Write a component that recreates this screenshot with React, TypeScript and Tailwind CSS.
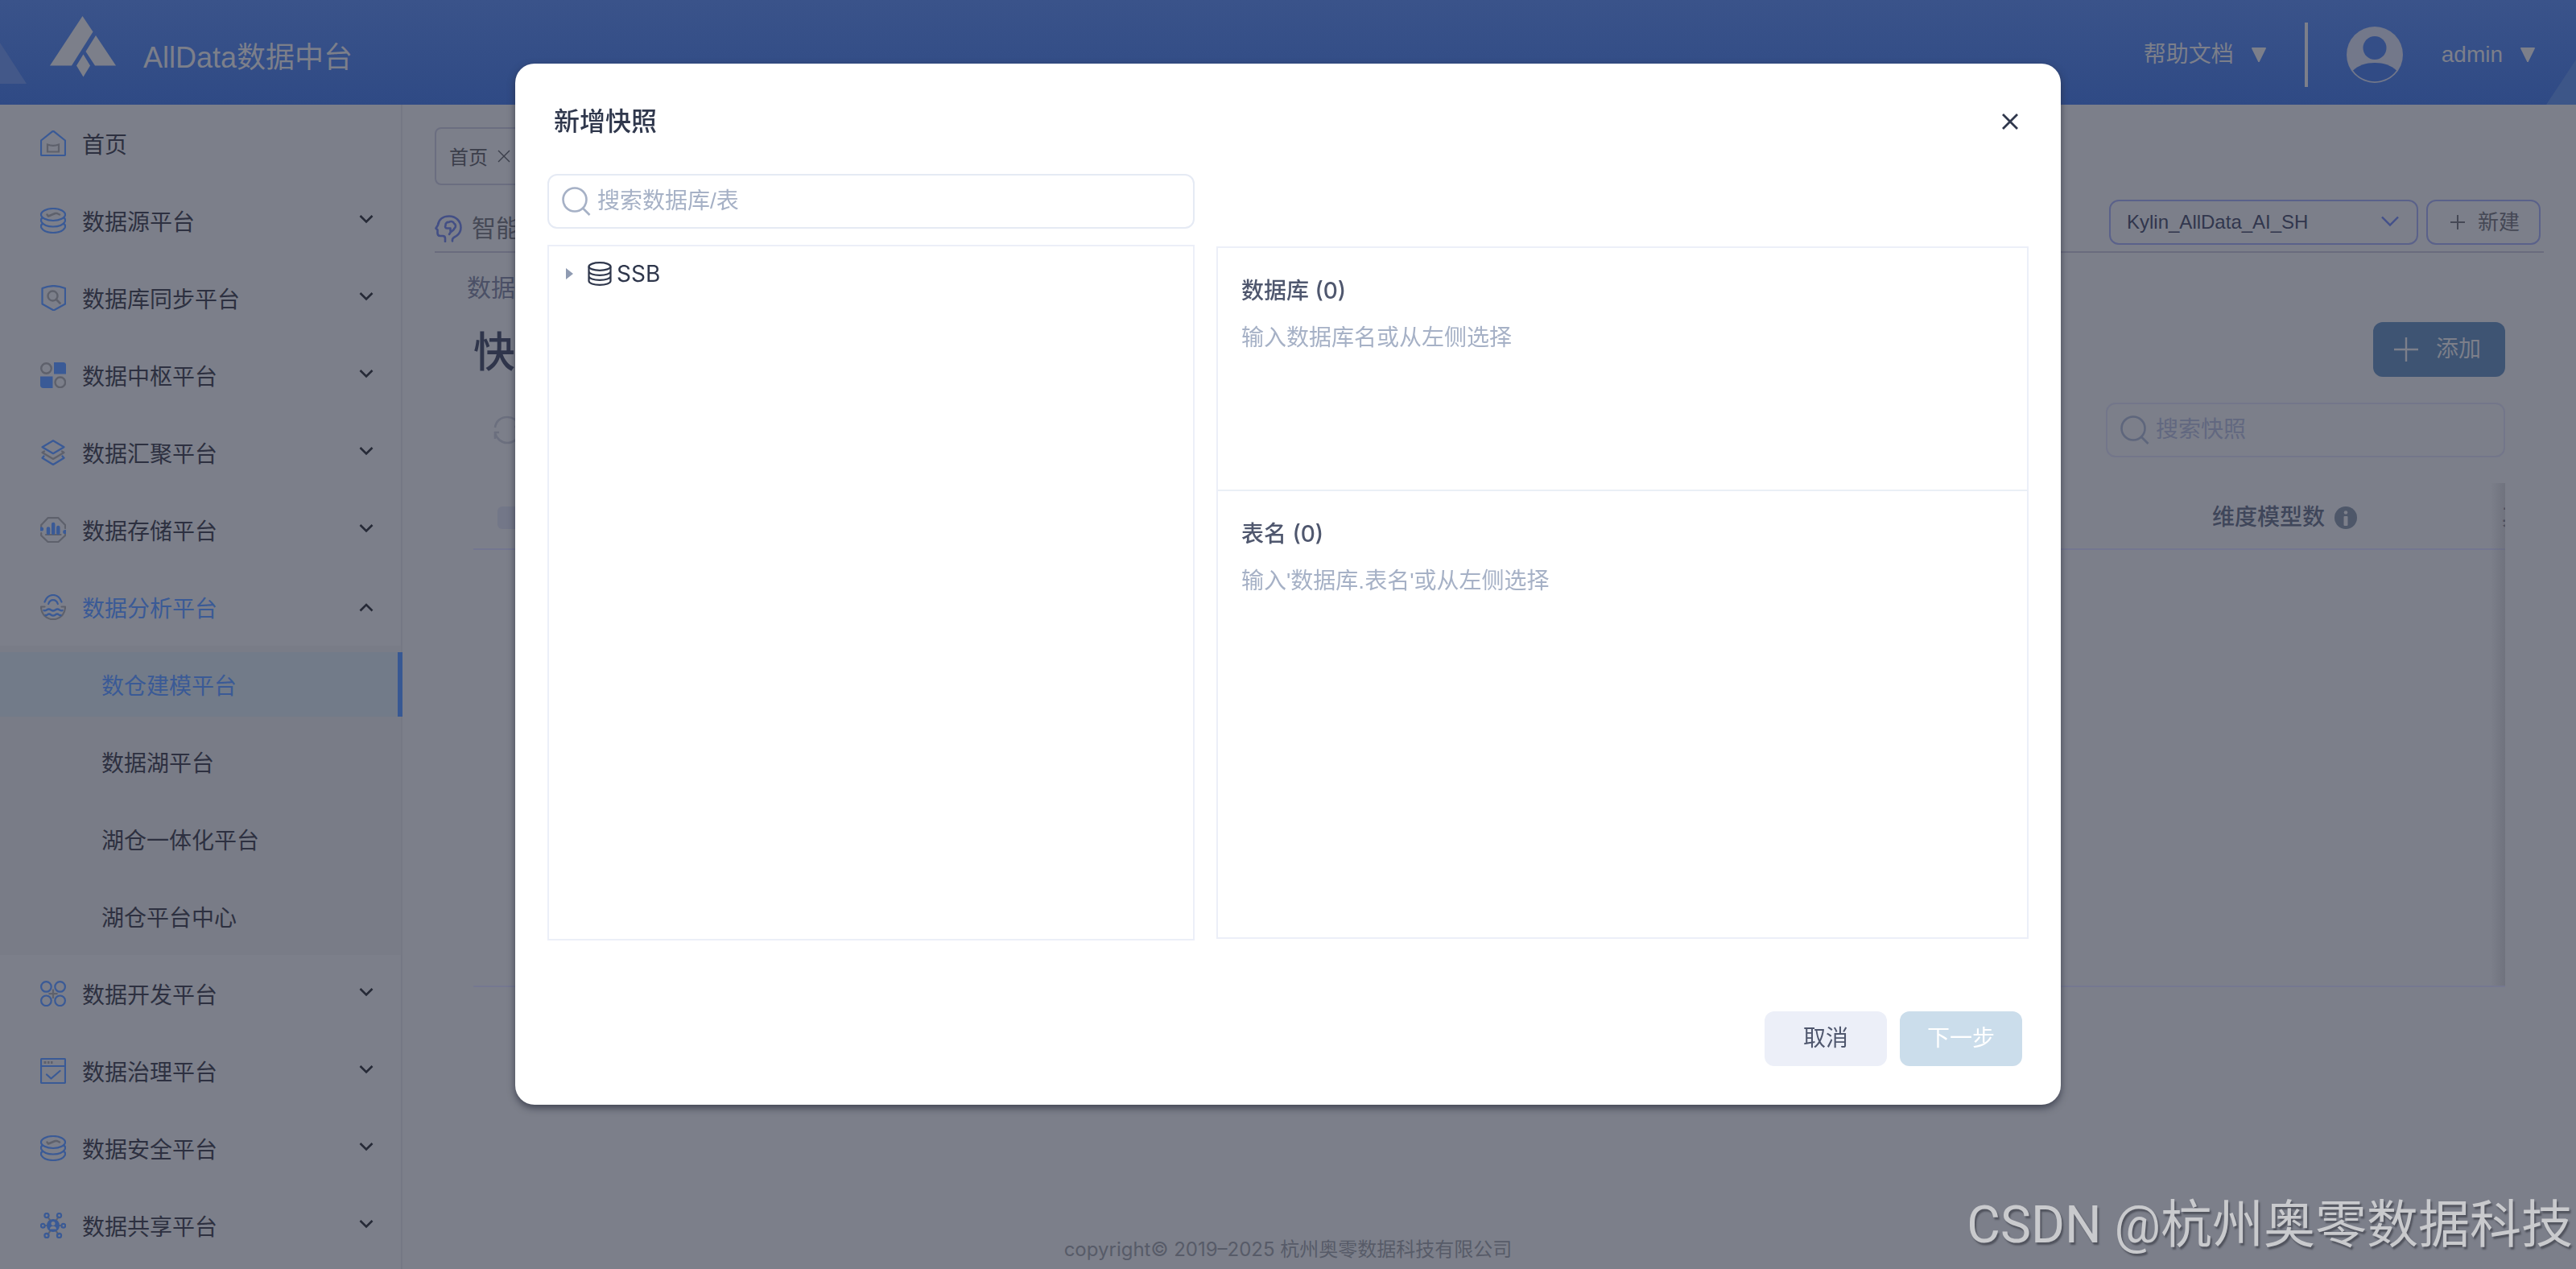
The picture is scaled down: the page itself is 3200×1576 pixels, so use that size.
import React from "react";

type IconProps = { children: React.ReactNode };

function MenuIcon({ children }: IconProps) {
  return (
    <svg
      viewBox="0 0 32 32"
      className="size-8 shrink-0 text-[#3a5a96]"
      fill="none"
      stroke="currentColor"
      strokeWidth="2.2"
      strokeLinecap="round"
      strokeLinejoin="round"
      aria-hidden="true"
    >
      {children}
    </svg>
  );
}

const GREY = "#5e616c";

const HomeIcon = () => (
  <MenuIcon>
    <path d="M1 12.5 14.6 1.6a2.2 2.2 0 0 1 2.8 0L31 12.5V30a1 1 0 0 1-1 1H2a1 1 0 0 1-1-1z" />
    <path d="M9 17.500c4.500 1.800 9.500 1.800 14 0V26.500H9z" stroke={GREY} strokeLinejoin="miter" />
  </MenuIcon>
);

const CoinsIcon = () => (
  <MenuIcon>
    <ellipse cx="16" cy="8.500" rx="15" ry="7.500" />
    <path d="M2.500 12.500C.5 14 .8 16 1.500 17.500 3.500 21 9 23.500 16 23.500s12.500-2.500 14.500-6c.7-1.500 1-3.500-1-5" />
    <path d="M2.500 20C.5 21.500.8 23.500 1.500 25 3.500 28.500 9 31 16 31s12.500-2.500 14.500-6c.7-1.500 1-3.500-1-5" />
    <path d="M8.500 8.500l1.500 2 8.500-3.500 2.500 0 3 1.500" stroke={GREY} strokeWidth="2.500" />
  </MenuIcon>
);

const ShieldIcon = () => (
  <MenuIcon>
    <path d="M2.500 4C11 .4 22 .4 31 4v19.500L16.700 31.500 2.500 23.500z" />
    <ellipse cx="15.500" cy="13.500" rx="6" ry="6" stroke={GREY} strokeWidth="2.400" />
    <path d="M20 18l4.500 4.500" stroke={GREY} strokeWidth="2.600" />
  </MenuIcon>
);

const HubIcon = () => (
  <MenuIcon>
    <circle cx="7.500" cy="7.500" r="6.300" stroke={GREY} strokeWidth="2.400" />
    <path d="M17 0h11.500A3.500 3.500 0 0 1 32 3.500V14.500H17z" fill="currentColor" stroke="none" />
    <path d="M0 17.500h15.500V32H4a4 4 0 0 1-4-4z" fill="currentColor" stroke="none" />
    <circle cx="24.800" cy="24.800" r="6.300" stroke={GREY} strokeWidth="2.400" />
  </MenuIcon>
);

const LayersIcon = () => (
  <MenuIcon>
    <path d="M5 14.500l-2.500 1.500L16 24l13.500-8-2.500-1.500" stroke={GREY} />
    <path d="M16 1.200 29.500 9.200 16 17.200 2.500 9.200z" />
    <path d="M4.500 20.500l-2 2.200L16 31l13.500-8.300-2-2.200" />
  </MenuIcon>
);

const StorageIcon = () => (
  <MenuIcon>
    <path d="M1.200 12.500V10L9.500 1.200h13L31 10v4M1.200 20v3L9.500 31h13L31 23v-2M7 22h18.500" stroke={GREY} />
    <path d="M10 20v-5.500M16.200 20V9M22.300 20v-7" strokeWidth="4.500" />
    <circle cx="1.500" cy="15" r="1.500" fill="currentColor" />
    <circle cx="30.800" cy="18.500" r="1.500" fill="currentColor" />
  </MenuIcon>
);

const LakeIcon = () => (
  <MenuIcon>
    <path d="M5.500 15.500H1c0 9 6.500 15.700 15 15.700S31 24.500 31 15.500h-4.500" stroke={GREY} />
    <path d="M5.500 9.500C7.500 4 11.500 1 16 1s8.500 3 10.500 8.500M10.200 12c1-3 3.200-4.800 5.800-4.800s4.800 1.800 5.800 4.800" />
    <path
      d="M4.500 20c2.500 1.500 3.500-1.500 6-1.500s3 2 5.500 2 3-2 5.500-2 3.500 3 6 1.500M6.500 26c2 1 2.500-1.500 4.500-1.500s2.500 2 5 2 3-2 5-2 2.500 2.500 4.500 1.500"
      strokeWidth="2.400"
    />
  </MenuIcon>
);

const DevIcon = () => (
  <MenuIcon>
    <circle cx="7.400" cy="7.400" r="6.300" />
    <circle cx="24.600" cy="7.400" r="6.300" />
    <circle cx="7.400" cy="24.800" r="6.300" />
    <circle cx="24.600" cy="24.800" r="6.300" />
    <path d="M16 10.500v11.500M10.500 16.200h11" stroke={GREY} strokeLinecap="butt" />
  </MenuIcon>
);

const GovernIcon = () => (
  <MenuIcon>
    <rect x="1" y="1" width="30" height="30" rx="1" />
    <path d="M1 10h30M8 20.500l5.500 5 11-9.500" />
    <path d="M4.500 5.500h3M9 5.500h2.500M13 5.500h2.500" stroke={GREY} strokeWidth="3" strokeLinecap="butt" />
  </MenuIcon>
);

const ShareIcon = () => (
  <MenuIcon>
    <path d="M9.500 5.500l4 6M22.500 5.500l-4 6M9.500 27l4-6M22.500 27l-4-6M6 16h3M23 16h3" stroke={GREY} />
    <circle cx="16" cy="16" r="8" fill="currentColor" stroke="none" />
    <circle cx="16" cy="13.500" r="2.500" fill="#7c7f8a" stroke="none" />
    <path d="M12 20.500c0-5 8-5 8 0z" fill="#7c7f8a" stroke="none" />
    <circle cx="8" cy="3.500" r="2.600" />
    <circle cx="23.500" cy="3.500" r="2.600" />
    <circle cx="3.300" cy="16.300" r="2.400" />
    <circle cx="28.800" cy="16.300" r="2.400" />
    <circle cx="8" cy="28.500" r="2.600" />
    <circle cx="23.500" cy="28.500" r="2.600" />
  </MenuIcon>
);

function Chevron({ up = false }: { up?: boolean }) {
  return (
    <svg
      viewBox="0 0 18 16"
      className="h-4 w-[18px] shrink-0 text-[#262a37]"
      fill="none"
      stroke="currentColor"
      strokeWidth="2.600"
      aria-hidden="true"
    >
      <path d={up ? "M1.500 12.500 9 5l7.500 7.500" : "M1.500 2 9 9.500 16.500 2"} />
    </svg>
  );
}

function Caret() {
  return (
    <svg viewBox="0 0 18 18" className="size-[18px] fill-[#7c7f8a]" aria-hidden="true">
      <path d="M1 0h16a1 1 0 0 1 .9 1.300L10 17.200a1 1 0 0 1-2 0L.1 1.300A1 1 0 0 1 1 0z" />
    </svg>
  );
}

function SearchIcon() {
  return (
    <svg viewBox="0 0 36 36" className="size-9 shrink-0" fill="none" stroke="currentColor" strokeWidth="2.600" aria-hidden="true">
      <circle cx="16" cy="16" r="14.500" />
      <path d="M26 26.500l8.500 8.500" />
    </svg>
  );
}

type Item = { label: string; icon: React.ReactNode; leaf?: boolean; children?: string[] };

const MENU: Item[] = [
  { label: "首页", icon: <HomeIcon />, leaf: true },
  { label: "数据源平台", icon: <CoinsIcon /> },
  { label: "数据库同步平台", icon: <ShieldIcon /> },
  { label: "数据中枢平台", icon: <HubIcon /> },
  { label: "数据汇聚平台", icon: <LayersIcon /> },
  { label: "数据存储平台", icon: <StorageIcon /> },
  {
    label: "数据分析平台",
    icon: <LakeIcon />,
    children: ["数仓建模平台", "数据湖平台", "湖仓一体化平台", "湖仓平台中心"],
  },
  { label: "数据开发平台", icon: <DevIcon /> },
  { label: "数据治理平台", icon: <GovernIcon /> },
  { label: "数据安全平台", icon: <CoinsIcon /> },
  { label: "数据共享平台", icon: <ShareIcon /> },
];

function Header() {
  return (
    <header className="relative flex h-[130px] items-start justify-between overflow-hidden bg-linear-to-b from-[#3a538a] to-[#2f4a85] text-[#7c7f8a]">
      <svg viewBox="0 0 33 52" className="absolute top-[53px] left-0 h-[52px] w-[33px] fill-[#435889]" aria-hidden="true">
        <path d="M0 0l33 51H0z" />
      </svg>
      <svg viewBox="0 0 37 56" className="absolute right-0 bottom-0 h-14 w-[37px] fill-[#3d5688]" aria-hidden="true">
        <path d="M37 0v56H0z" />
      </svg>
      <div className="flex items-start gap-[34px] pt-5 pl-[62px]">
        <svg viewBox="0 0 82 76" className="h-[76px] w-[82px] fill-current" aria-hidden="true">
          <path d="M40.500 0 53.500 19.500 27 61.500H0z" />
          <path d="M57 24 82 61.500H56L44.500 44z" />
          <path d="M41.500 47.500 50 61.500 41.500 75.500 33 61.500z" />
        </svg>
        <h1 className="pt-[26px] text-[36px] leading-[52px]">AllData数据中台</h1>
      </div>
      <div className="flex items-center pt-7 pr-[51px] text-[28px] leading-10">
        <button type="button" className="flex items-center gap-[22px]">
          帮助文档
          <Caret />
        </button>
        <span className="ml-12 h-20 w-1 bg-current" />
        <svg viewBox="0 0 70 70" className="ml-12 size-[70px]" aria-hidden="true">
          <circle cx="35" cy="35" r="35" fill="#73788a" />
          <circle cx="35" cy="26.500" r="14.500" fill="#344e87" />
          <path d="M8 54.500C15 48 24 45 35 45s20 3 27 9.500A33.500 33.500 0 0 1 8 54.500z" fill="#314b85" />
        </svg>
        <button type="button" className="ml-12 flex items-center gap-[22px]">
          admin
          <Caret />
        </button>
      </div>
    </header>
  );
}

function Sidebar() {
  return (
    <nav className="w-[500px] shrink-0 border-r-2 border-[#757884] font-['Noto_Sans_CJK_SC',sans-serif] text-[28px] leading-10 text-[#2d3040]">
      {MENU.map((item) => (
        <div key={item.label}>
          <button
            type="button"
            className="flex h-24 w-full items-center gap-5 pr-[34px] pl-[50px] text-left"
            aria-expanded={item.leaf ? undefined : Boolean(item.children)}
          >
            {item.icon}
            <span className={item.children ? "flex-1 text-[#3a5a96]" : "flex-1"}>{item.label}</span>
            {!item.leaf && <Chevron up={Boolean(item.children)} />}
          </button>
          {item.children && (
            <ul className="bg-[#797c87]">
              {item.children.map((child, i) => (
                <li key={child} className="py-2">
                  <a
                    href="#"
                    className={
                      i === 0
                        ? "-mr-0.5 flex h-20 items-center border-r-6 border-[#375893] bg-[#727b89] pl-[126px] text-[#3a5a96]"
                        : "flex h-20 items-center pl-[126px]"
                    }
                  >
                    {child}
                  </a>
                </li>
              ))}
            </ul>
          )}
        </div>
      ))}
    </nav>
  );
}

function Page() {
  return (
    <main className="flex min-w-0 flex-1 flex-col pt-7 text-[28px] leading-10">
      <div className="px-10">
        <div className="flex h-[72px] w-fit items-center gap-3 rounded-lg border-2 border-[#6b6e80] px-4 font-['Noto_Sans_CJK_SC',sans-serif] text-[24px] text-[#3b3e4a]">
          首页
          <button type="button" aria-label="关闭标签">
            <svg viewBox="0 0 16 16" className="size-4" fill="none" stroke="currentColor" strokeWidth="1.400" aria-hidden="true">
              <path d="M1 1l14 14M15 1 1 15" />
            </svg>
          </button>
        </div>
        <div className="mt-[18px] flex h-[66px] items-start border-b-2 border-[#6a6c7e]">
          <div className="flex flex-1 items-center gap-3 pt-4 text-[30px] text-[#454855]">
            <svg
              viewBox="0 0 34 34"
              className="size-[34px] text-[#434f85]"
              fill="none"
              stroke="currentColor"
              strokeWidth="2.600"
              strokeLinecap="round"
              strokeLinejoin="round"
              aria-hidden="true"
            >
              <path d="M13 33v-4c0-2-1-3-3-3H7c-3 0-3.500-1.500-3.500-4v-3.500l-2-2 2.500-4C5 5.500 10.500 1.500 18 1.500c8 0 14.500 6 14.500 14 0 5-2 8-5.500 10.500-4 2.500-5.500 3-5 6.500" />
              <path d="M16 16.500c-3 0-3.500-2-2.500-3.500-.5-3 2-4.500 4-4 3-2 6-.5 6.500 1.500 2.500 1 2.500 4.500.5 6-1 3-2.500 2.500-4.500 4.500l-2 3M16 16.500h3.500V20" />
            </svg>
            智能
          </div>
          <div className="flex gap-2.5 pr-1">
            <div className="relative text-[24px]">
              <select
                aria-label="项目"
                className="h-14 w-96 appearance-none rounded-xl border-2 border-[#5a618a] bg-transparent px-5 text-[#31364d]"
              >
                <option>Kylin_AllData_AI_SH</option>
              </select>
              <svg
                viewBox="0 0 22 14"
                className="pointer-events-none absolute top-5 right-6 h-3.5 w-[22px] text-[#43508a]"
                fill="none"
                stroke="currentColor"
                strokeWidth="2.400"
                aria-hidden="true"
              >
                <path d="M1 1.500l10 10 10-10" />
              </svg>
            </div>
            <button
              type="button"
              className="flex h-14 w-[142px] items-center justify-center gap-4 rounded-xl border-2 border-[#5a618a] pl-1 text-[26px] text-[#454855]"
            >
              <svg viewBox="0 0 18 18" className="size-[18px]" stroke="currentColor" strokeWidth="2" aria-hidden="true">
                <path d="M9 0v18M0 9h18" />
              </svg>
              新建
            </button>
          </div>
        </div>
      </div>

      <section className="px-10 pt-6">
        <p className="pl-10 text-[30px] text-[#4b5066]">数据资产</p>
        <div className="px-12">
          <div className="mt-[22px] flex h-[76px] items-start justify-between">
            <h2 className="text-[52px] leading-[76px] font-medium text-[#2f354b]">快照</h2>
            <button type="button" className="flex h-[68px] items-center gap-[22px] rounded-xl bg-[#3e5473] pr-[30px] pl-[26px] text-[#7c7f8a]">
              <svg viewBox="0 0 30 30" className="size-[30px]" stroke="currentColor" strokeWidth="2.400" aria-hidden="true">
                <path d="M15 0v30M0 15h30" />
              </svg>
              添加
            </button>
          </div>
          <div className="mt-6 flex items-center justify-between">
            <button type="button" aria-label="刷新" className="ml-6">
              <svg viewBox="0 0 36 36" className="size-9 text-[#6b6f7e]" fill="none" stroke="currentColor" strokeWidth="2.600" aria-hidden="true">
                <path d="M3 15C4 7 10 2 18 2c7 0 12.500 4 14.500 9.500M2 21h6M3 20v9M3 22c2 7 8 12 15 12 8 0 14-5 15-12M33 14h-6M33 15V6" />
              </svg>
            </button>
            <label className="flex h-[68px] w-[496px] items-center gap-2 rounded-xl border-2 border-[#73768a] pl-4 text-[#5e667c]">
              <SearchIcon />
              <input type="text" aria-label="搜索快照" placeholder="搜索快照" className="min-w-0 flex-1 bg-transparent outline-none placeholder:text-[#626880]" />
            </label>
          </div>
          <div className="relative mt-8 h-[626px] overflow-hidden border-b-2 border-[#757890]">
            <table className="w-full table-fixed">
              <thead>
                <tr className="h-[82px] border-b-2 border-[#737690] text-[#3f465a]">
                  <th className="w-[90px] pt-1 pl-[30px] text-left">
                    <input type="checkbox" aria-label="全选" disabled className="block size-7 appearance-none rounded-md bg-[#737788]" />
                  </th>
                  <th />
                  <th className="w-[360px] font-medium whitespace-nowrap">
                    <span className="flex items-center gap-3 pt-1">
                      维度模型数
                      <svg viewBox="0 0 28 28" className="size-7" aria-hidden="true">
                        <circle cx="14" cy="14" r="14" fill="#4e5769" />
                        <circle cx="14" cy="7.500" r="2.300" fill="#7c7f8a" />
                        <rect x="11.500" y="12" width="5" height="12" rx="1" fill="#7c7f8a" />
                      </svg>
                    </span>
                  </th>
                  <th className="w-1 font-medium whitespace-nowrap">
                    <span className="block pt-1 text-left">其他</span>
                  </th>
                </tr>
              </thead>
            </table>
            <span className="absolute inset-y-0 right-0 w-[18px] bg-linear-to-l from-[#5c5f6b]/40 to-transparent" />
          </div>
        </div>
      </section>
      <footer className="mt-auto pr-[500px] pb-1.5 text-center font-[Inter,'Noto_Sans_CJK_SC',sans-serif] text-[24px] leading-9 text-[#575b68]">
        copyright© 2019–2025 杭州奥零数据科技有限公司
      </footer>
    </main>
  );
}

function PickSection({ title, hint, className }: { title: string; hint: string; className: string }) {
  return (
    <section className={className}>
      <h3 className="font-[Inter,'Noto_Sans_CJK_SC',sans-serif] font-medium text-[#4f576e]">{title}</h3>
      <p className="mt-[19px] text-[#a6b1c6]">{hint}</p>
    </section>
  );
}

function SnapshotDialog() {
  return (
    <div className="fixed inset-0 flex items-start justify-center pt-[5vh]">
      <div
        role="dialog"
        aria-modal="true"
        aria-labelledby="snapshot-title"
        className="w-3/5 rounded-3xl bg-white px-10 py-12 text-[28px] leading-10 shadow-[0_4px_10px_rgba(40,44,60,0.700)]"
      >
        <div className="flex h-12 items-center justify-between pr-3 pl-2">
          <h2 id="snapshot-title" className="text-[32px] font-medium text-[#2f374c]">
            新增快照
          </h2>
          <button type="button" aria-label="关闭">
            <svg viewBox="0 0 22 22" className="size-[22px]" fill="none" stroke="#2f374c" strokeWidth="2.800" aria-hidden="true">
              <path d="M2 2l18 18M20 2 2 20" />
            </svg>
          </button>
        </div>
        <div className="mt-[41px] grid grid-cols-[804fr_1009fr] gap-[27px]">
          <div>
            <label className="flex h-[68px] items-center gap-2 rounded-xl border-2 border-[#e5eaf4] pl-4 text-[#a6b1c6]">
              <SearchIcon />
              <input type="text" aria-label="搜索数据库/表" placeholder="搜索数据库/表" className="min-w-0 flex-1 outline-none placeholder:text-[#a6b1c6]" />
            </label>
            <div className="mt-5 h-[864px] border-2 border-[#eceff8] pt-3.5 pl-[21px]">
              <button type="button" className="flex items-center font-[Inter,sans-serif] text-[#2f374c]">
                <svg viewBox="0 0 9 14" className="mr-[18px] h-3.5 w-[9px] fill-[#8f9bb2]" aria-hidden="true">
                  <path d="M0 0l9 7-9 7z" />
                </svg>
                <svg viewBox="0 0 30 30" className="mr-1.5 size-[30px]" fill="none" stroke="currentColor" strokeWidth="2.200" aria-hidden="true">
                  <ellipse cx="15" cy="6" rx="13.500" ry="4.800" />
                  <path d="M1.500 6v18c0 2.700 6 4.800 13.500 4.800s13.500-2.100 13.500-4.800V6M1.500 12c0 2.700 6 4.800 13.500 4.800S28.500 14.700 28.500 12M1.500 18c0 2.700 6 4.800 13.500 4.800S28.500 20.700 28.500 18" />
                </svg>
                SSB
              </button>
            </div>
          </div>
          <div className="pt-[90px]">
            <div className="h-[860px] border-2 border-[#eceff8]">
              <PickSection
                title="数据库 (0)"
                hint="输入数据库名或从左侧选择"
                className="h-[302px] border-b-2 border-[#eaeff6] px-[29px] pt-[33px]"
              />
              <PickSection title="表名 (0)" hint="输入'数据库.表名'或从左侧选择" className="px-[29px] pt-[33px]" />
            </div>
          </div>
        </div>
        <div className="mt-[88px] flex justify-end gap-4 pr-2">
          <button type="button" className="h-[68px] w-[152px] rounded-xl bg-[#eceff8] text-[#4f576e]">
            取消
          </button>
          <button type="button" disabled className="h-[68px] w-[152px] rounded-xl bg-[#cbddeb] text-white">
            下一步
          </button>
        </div>
      </div>
    </div>
  );
}

export default function App() {
  return (
    <div className="flex min-h-screen flex-col bg-[#7c7f8a] font-['Liberation_Sans','Noto_Sans_CJK_SC',sans-serif]">
      <Header />
      <div className="flex flex-1">
        <Sidebar />
        <Page />
      </div>
      <SnapshotDialog />
      <div className="pointer-events-none fixed right-1 bottom-1.5 font-[Roboto,'Noto_Sans_CJK_SC',sans-serif] text-[64px] leading-[96px] whitespace-nowrap text-[#c9cacd] [text-shadow:2px_3px_2px_rgba(70,72,82,0.800)]">
        CSDN @杭州奥零数据科技
      </div>
    </div>
  );
}
